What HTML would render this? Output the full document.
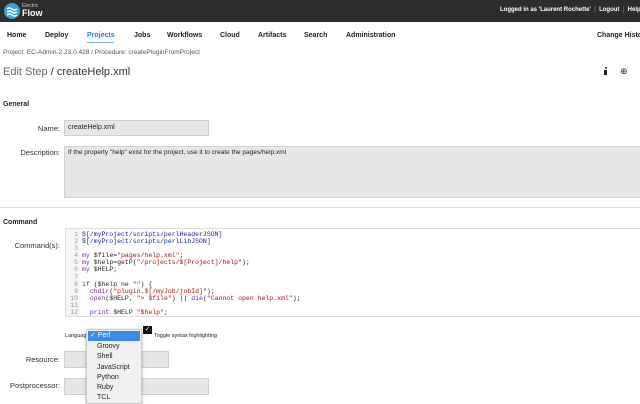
<!DOCTYPE html>
<html><head><style>
*{margin:0;padding:0;box-sizing:border-box}
body{width:640px;height:400px;overflow:hidden;background:#fff;font-family:"Liberation Sans",sans-serif;color:#222;position:relative}
.a{position:absolute;white-space:nowrap}
.top{left:0;top:0;width:640px;height:22px;background:#2d2d2d}
.nav{font-size:7px;font-weight:bold;top:32px}
.lbl{font-size:7.5px;color:#333;text-align:right;width:60px;left:0}
.box{background:#e6e7e9;border:1px solid #cfd0d2}
.code{font-family:"Liberation Mono",monospace;font-size:6.5px;line-height:7.1px}
.b{color:#1a1aa6}.s{color:#a31515}.k{color:#7a2aa8}
</style></head><body>
<div class="a top"></div>
<svg class="a" style="left:4px;top:3px" width="16" height="16" viewBox="0 0 16 16"><circle cx="8" cy="8" r="8" fill="#3aa0d8"/><path d="M3 6q2.5-2 5 0t5 0M3 9q2.5-2 5 0t5 0M3 12q2.5-2 5 0t5 0" stroke="#fff" stroke-width="1.4" fill="none"/></svg>
<div class="a" style="left:22px;top:3px;font-size:5px;color:#ccc">Electric</div>
<div class="a" style="left:22px;top:8px;font-size:9px;font-weight:bold;color:#fff">Flow</div>
<div class="a" style="left:500px;top:7px;font-size:6px;color:#fff;font-weight:bold">Logged in as 'Laurent Rochette' <span style="color:#888;font-weight:normal">&nbsp;|&nbsp;</span> Logout <span style="color:#888;font-weight:normal">&nbsp;|&nbsp;</span> Help</div>
<div class="a nav" style="left:7px">Home</div>
<div class="a nav" style="left:45px">Deploy</div>
<div class="a nav" style="left:87px;color:#2b7bd0">Projects</div>
<div class="a" style="left:87px;top:42px;width:27px;height:1px;background:#7fb3e6"></div>
<div class="a nav" style="left:134px">Jobs</div>
<div class="a nav" style="left:167px">Workflows</div>
<div class="a nav" style="left:220px">Cloud</div>
<div class="a nav" style="left:258px">Artifacts</div>
<div class="a nav" style="left:304px">Search</div>
<div class="a nav" style="left:346px">Administration</div>
<div class="a nav" style="left:597px">Change History</div>
<div class="a" style="left:3px;top:49px;font-size:6.5px;color:#555">Project: EC-Admin-2.23.0.428 / Procedure: createPluginFromProject</div>
<div class="a" style="left:3px;top:66px;font-size:11px;color:#666">Edit Step <span style="color:#333">/ createHelp.xml</span></div>
<div class="a" style="left:604px;top:70px;width:3px;height:5px;background:#222"></div>
<div class="a" style="left:604.5px;top:67px;width:2px;height:2px;background:#222;border-radius:1px"></div>
<div class="a" style="left:620px;top:66px;font-size:9px">⊕</div>
<div class="a" style="left:3px;top:101px;font-size:7px;font-weight:bold">General</div>
<div class="a lbl" style="top:124px">Name:</div>
<div class="a box" style="left:64px;top:120px;width:145px;height:16px"></div>
<div class="a" style="left:68px;top:124px;font-size:7px">createHelp.xml</div>
<div class="a lbl" style="top:148px">Description:</div>
<div class="a box" style="left:64px;top:146px;width:580px;height:52px"></div>
<div class="a" style="left:68px;top:149px;font-size:6.5px">If the property "help" exist for the project, use it to create the pages/help.xml</div>
<div class="a" style="left:0;top:207px;width:640px;height:1px;background:#ddd"></div>
<div class="a" style="left:3px;top:219px;font-size:7px;font-weight:bold">Command</div>
<div class="a lbl" style="top:241px">Command(s):</div>
<div class="a" style="left:65px;top:228px;width:580px;height:89px;border:1px solid #ddd;background:#fff"></div>
<div class="a" style="left:66px;top:229px;width:14px;height:87px;background:#f5f5f5"></div>
<div class="a code" style="left:68px;top:231px;color:#999;text-align:right;width:10px">1<br>2<br>3<br>4<br>5<br>6<br>7<br>8<br>9<br>10<br>11<br>12</div>
<div class="a code" style="left:82px;top:231px"><span class="b">$[/myProject/scripts/perlHeaderJSON]</span><br><span class="b">$[/myProject/scripts/perlLibJSON]</span><br><br><span class="k">my</span> $file=<span class="s">"pages/help.xml"</span>;<br><span class="k">my</span> $help=getP(<span class="s">"/projects/$[Project]/help"</span>);<br><span class="k">my</span> $HELP;<br><br><span class="k">if</span> ($help ne <span class="s">""</span>) {<br>&nbsp;&nbsp;<span class="k">chdir</span>(<span class="s">"plugin.$[/myJob/jobId]"</span>);<br>&nbsp;&nbsp;<span class="k">open</span>($HELP, <span class="s">"&gt; $file"</span>) || <span class="k">die</span>(<span class="s">"Cannot open help.xml"</span>);<br><br>&nbsp;&nbsp;<span class="k">print</span> $HELP <span class="s">"$help"</span>;</div>
<div class="a" style="left:65px;top:333px;font-size:5.5px">Language</div>
<div class="a" style="left:143px;top:326px;width:9px;height:8px;background:#111;color:#fff;font-size:7px;line-height:8px;text-align:center">✓</div>
<div class="a" style="left:154px;top:333px;font-size:5.5px">Toggle syntax highlighting</div>
<div class="a lbl" style="top:355px">Resource:</div>
<div class="a box" style="left:64px;top:351px;width:105px;height:17px"></div>
<div class="a lbl" style="top:381px">Postprocessor:</div>
<div class="a box" style="left:64px;top:378px;width:145px;height:17px"></div>
<div class="a" style="left:86px;top:329px;width:56px;height:75px;background:#f0f0f0;border:1px solid #ccc;box-shadow:0 1px 3px rgba(0,0,0,.3);font-size:7px;line-height:10.2px"><div style="background:#3b8ce6;color:#fff;padding-left:2px;margin:1px">✓ Perl</div><div style="padding-left:10px">Groovy<br>Shell<br>JavaScript<br>Python<br>Ruby<br>TCL</div></div>
</body></html>
